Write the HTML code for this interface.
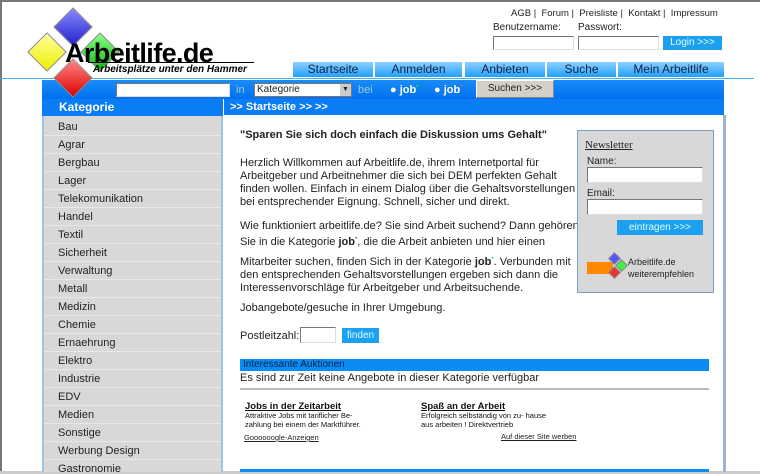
<!DOCTYPE html>
<html><head><meta charset="utf-8"><style>
*{margin:0;padding:0;box-sizing:border-box}
body{width:760px;height:474px;overflow:hidden;background:#fff;font-family:"Liberation Sans",Arial,sans-serif;position:relative;color:#222}
.a{position:absolute}
sup{line-height:0;vertical-align:4px}
.tab{position:absolute;top:62px;height:15px;background:linear-gradient(#8fd0ff,#1ea0ff);color:#124;font-size:12px;text-align:center;line-height:15px}
.inp{position:absolute;background:#fff;border:1px solid #777;border-right-color:#ddd;border-bottom-color:#ddd}
.side div{height:18px;line-height:18px;padding-left:14px;font-size:11px;color:#222;border-bottom:1px solid #e8e8e8}
.c{font-size:11px;line-height:13px;color:#222}
.dia{position:absolute;width:28px;height:28px;transform:rotate(45deg);border:1px solid #888;z-index:3}
</style></head><body>
<div class="a" style="left:0;top:0;width:760px;height:2px;background:#777"></div>
<div class="a" style="left:0;top:0;width:2px;height:474px;background:#777"></div>
<div class="a" style="left:0;top:471px;width:760px;height:3px;background:#ccc"></div>

<!-- logo -->
<div class="dia" style="left:59px;top:13px;background:linear-gradient(135deg,#88f,#22c)"></div>
<div class="dia" style="left:33px;top:38px;background:linear-gradient(135deg,#ffffa0,#ee0)"></div>
<div class="dia" style="left:86px;top:38px;background:linear-gradient(135deg,#8f8,#1b1)"></div>
<div class="dia" style="left:59px;top:64px;background:linear-gradient(135deg,#f88,#d00)"></div>
<div class="a" style="left:65px;top:38px;font-size:27px;font-weight:bold;color:#000;letter-spacing:-0.6px;z-index:4">Arbeitlife.de</div>
<div class="a" style="left:88px;top:62px;width:166px;height:1px;background:#000;z-index:4"></div>
<div class="a" style="left:93px;top:64px;font-size:10px;font-weight:bold;font-style:italic;color:#000;z-index:4">Arbeitsplätze unter den Hammer</div>

<!-- top links -->
<div class="a" style="left:511px;top:8px;font-size:9.5px;color:#222">AGB |&nbsp; Forum |&nbsp; Preisliste |&nbsp; Kontakt |&nbsp; Impressum</div>
<div class="a" style="left:493px;top:22px;font-size:10px">Benutzername:</div>
<div class="a" style="left:578px;top:22px;font-size:10px">Passwort:</div>
<div class="inp" style="left:493px;top:36px;width:81px;height:14px"></div>
<div class="inp" style="left:578px;top:36px;width:81px;height:14px"></div>
<div class="a" style="left:663px;top:36px;width:59px;height:14px;background:#1ea0f0;color:#dff;font-size:10px;text-align:center;line-height:14px">Login &gt;&gt;&gt;</div>

<div class="tab" style="left:293px;width:80px">Startseite</div>
<div class="tab" style="left:375px;width:87px">Anmelden</div>
<div class="tab" style="left:465px;width:80px">Anbieten</div>
<div class="tab" style="left:547px;width:69px">Suche</div>
<div class="tab" style="left:618px;width:106px">Mein Arbeitlife</div>
<div class="a" style="left:0;top:78px;width:754px;height:1px;background:#4ab0e8"></div>

<!-- search bar -->
<div class="a" style="left:42px;top:80px;width:682px;height:19px;background:linear-gradient(#1a8cf8,#0070f0)"></div>
<div class="inp" style="left:116px;top:83px;width:114px;height:14px"></div>
<div class="a" style="left:236px;top:84px;font-size:11px;color:#9cd">in</div>
<div class="a" style="left:254px;top:83px;width:98px;height:14px;background:#fff;border:1px solid #777;font-size:10px;line-height:12px;padding-left:2px">Kategorie<span style="position:absolute;right:0;top:0;width:11px;height:12px;background:#ccc;font-size:7px;text-align:center">▼</span></div>
<div class="a" style="left:358px;top:84px;font-size:11px;color:#9cd">bei</div>
<div class="a" style="left:390px;top:84px;font-size:11px;font-weight:bold;color:#fff">● job<sup style="color:#0f0;font-size:6px">*</sup></div>
<div class="a" style="left:434px;top:84px;font-size:11px;font-weight:bold;color:#fff">● job<sup style="color:#f44;font-size:6px">*</sup></div>
<div class="a" style="left:476px;top:80px;width:78px;height:18px;background:#d4d0c8;border:1px solid #888;border-top-color:#fff;border-left-color:#fff;font-size:10px;text-align:center;line-height:16px">Suchen &gt;&gt;&gt;</div>

<!-- headers -->
<div class="a" style="left:42px;top:99px;width:181px;height:17px;background:#0a7cf4;color:#fff;font-size:12px;font-weight:bold;padding-left:17px;line-height:17px">Kategorie</div>
<div class="a" style="left:224px;top:99px;width:500px;height:16px;background:#0a7cf4;color:#fff;font-size:11px;font-weight:bold;padding-left:6px;line-height:16px">&gt;&gt; Startseite &gt;&gt; &gt;&gt;</div>

<!-- sidebar -->
<div class="a side" style="left:42px;top:116px;width:181px;height:356px;background:#d8d8d8;border-left:2px solid #9cc4e4;border-right:2px solid #9cc4e4;overflow:hidden;padding-top:2px">
<div>Bau</div><div>Agrar</div><div>Bergbau</div><div>Lager</div><div>Telekomunikation</div><div>Handel</div><div>Textil</div><div>Sicherheit</div><div>Verwaltung</div><div>Metall</div><div>Medizin</div><div>Chemie</div><div>Ernaehrung</div><div>Elektro</div><div>Industrie</div><div>EDV</div><div>Medien</div><div>Sonstige</div><div>Werbung Design</div><div>Gastronomie</div>
</div>
<div class="a" style="left:723px;top:115px;width:3px;height:357px;background:#9cb4d0"></div>

<!-- content -->
<div class="a c" style="left:240px;top:129px;font-weight:bold">"Sparen Sie sich doch einfach die Diskussion ums Gehalt"</div>
<div class="a c" style="left:240px;top:157px;white-space:nowrap">Herzlich Willkommen auf Arbeitlife.de, ihrem Internetportal für<br>Arbeitgeber und Arbeitnehmer die sich bei DEM perfekten Gehalt<br>finden wollen. Einfach in einem Dialog über die Gehaltsvorstellungen<br>bei entsprechender Eignung. Schnell, sicher und direkt.</div>
<div class="a c" style="left:240px;top:220px;white-space:nowrap">Wie funktioniert arbeitlife.de? Sie sind Arbeit suchend? Dann gehören</div>
<div class="a c" style="left:240px;top:236px;white-space:nowrap">Sie in die Kategorie <b>job</b><sup style="font-size:6px">*</sup>, die die Arbeit anbieten und hier einen</div>
<div class="a c" style="left:240px;top:256px;white-space:nowrap">Mitarbeiter suchen, finden Sich in der Kategorie <b>job</b><sup style="font-size:6px;color:#0c0">*</sup>. Verbunden mit<br>den entsprechenden Gehaltsvorstellungen ergeben sich dann die<br>Interessenvorschläge für Arbeitgeber und Arbeitsuchende.</div>
<div class="a c" style="left:240px;top:302px">Jobangebote/gesuche in Ihrer Umgebung.</div>
<div class="a c" style="left:240px;top:330px">Postleitzahl:</div>
<div class="inp" style="left:300px;top:327px;width:36px;height:16px"></div>
<div class="a" style="left:342px;top:328px;width:37px;height:15px;background:#1ea0f0;color:#dff;font-size:10px;text-align:center;line-height:15px">finden</div>

<!-- newsletter -->
<div class="a" style="left:577px;top:130px;width:137px;height:163px;background:#d8d8d8;border:1px solid #7aa0c8"></div>
<div class="a" style="left:585px;top:139px;font-family:'Liberation Serif',serif;font-size:11px;text-decoration:underline">Newsletter</div>
<div class="a c" style="left:587px;top:155px;font-size:10px">Name:</div>
<div class="inp" style="left:587px;top:167px;width:116px;height:16px"></div>
<div class="a c" style="left:587px;top:187px;font-size:10px">Email:</div>
<div class="inp" style="left:587px;top:199px;width:116px;height:16px"></div>
<div class="a" style="left:617px;top:220px;width:86px;height:15px;background:#1ea0f0;color:#dff;font-size:10px;text-align:center;line-height:15px">eintragen &gt;&gt;&gt;</div>
<div class="a" style="left:587px;top:262px;width:26px;height:12px;background:#f80"></div>
<div class="dia" style="left:610px;top:254px;width:9px;height:9px;background:#55f"></div>
<div class="dia" style="left:617px;top:261px;width:9px;height:9px;background:#4e4"></div>
<div class="dia" style="left:610px;top:268px;width:9px;height:9px;background:#e33"></div>
<div class="a c" style="left:628px;top:256px;font-size:9px;line-height:12px">Arbeitlife.de<br>weiterempfehlen</div>

<!-- auctions -->
<div class="a" style="left:240px;top:359px;width:469px;height:12px;background:#0a8cf4;color:#024;font-size:10px;line-height:12px;padding-left:3px">Interessante Auktionen</div>
<div class="a c" style="left:240px;top:372px">Es sind zur Zeit keine Angebote in dieser Kategorie verfügbar</div>
<div class="a" style="left:240px;top:388px;width:469px;height:2px;background:#bbb"></div>
<div class="a" style="left:245px;top:402px;font-size:9px;line-height:9px;color:#111"><b style="text-decoration:underline;font-size:9.5px">Jobs in der Zeitarbeit</b><br><span style="font-size:7.5px">Attraktive Jobs mit tariflicher Be-<br>zahlung bei einem der Marktführer.</span></div>
<div class="a" style="left:421px;top:402px;font-size:9px;line-height:9px;color:#111"><b style="text-decoration:underline;font-size:9.5px">Spaß an der Arbeit</b><br><span style="font-size:7.5px">Erfolgreich selbständig von zu- hause<br>aus arbeiten ! Direktvertrieb</span></div>
<div class="a" style="left:244px;top:433px;font-size:7.5px;text-decoration:underline">Goooooogle-Anzeigen</div>
<div class="a" style="left:501px;top:432px;font-size:7.5px;text-decoration:underline">Auf dieser Site werben</div>
<div class="a" style="left:240px;top:469px;width:469px;height:3px;background:#0a8cf4"></div>
</body></html>
